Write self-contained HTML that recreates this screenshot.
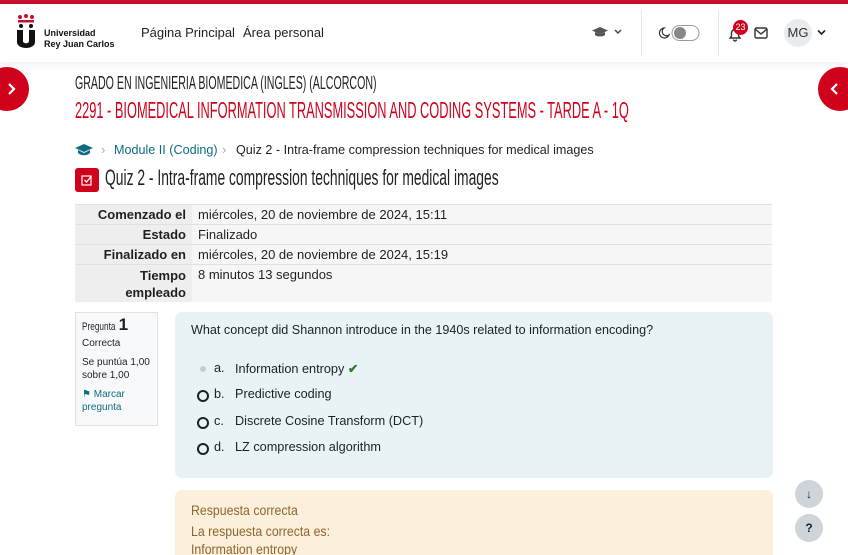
<!DOCTYPE html>
<html><head><meta charset="utf-8"><style>
*{box-sizing:border-box;margin:0;padding:0}
html,body{width:848px;height:555px;overflow:hidden}
body{background:#fff;font-family:"Liberation Sans",sans-serif;color:#1d2125;position:relative}
.topbar{position:absolute;top:0;left:0;width:848px;height:4px;background:#c8102e}
.nav{position:absolute;top:4px;left:0;width:848px;height:58px;background:#fff;box-shadow:0 2px 8px rgba(0,0,0,.07)}
.abs{position:absolute}
.cond{display:inline-block;transform-origin:left center;white-space:nowrap}
.navlink{font-size:13px;color:#1d2125;top:21px}
.sep{position:absolute;top:6px;width:1px;height:46px;background:#e5e5e5}
.fab{position:absolute;width:44px;height:44px;border-radius:22px;background:#d0021b;top:67px}
table{border-collapse:collapse;font-size:13px}
.tbl{position:absolute;left:75px;top:204px;width:697px}
.tbl td{border-top:1px solid #dee2e6;padding:2px 6px 1px;vertical-align:top;line-height:16px}
.tbl td.l{background:#eeeeee;text-align:right;font-weight:bold;width:117px}
.tbl td.v{background:#f6f6f6}
.radio{position:absolute;width:12px;height:12px;border:2px solid #1d2125;border-radius:50%;left:197px}
.opt{position:absolute;font-size:12.7px;left:214px}
.opt span{position:absolute;left:21px;white-space:nowrap}
.side{position:absolute;left:795px;width:28px;height:28px;border-radius:14px;background:#ced4da;font-size:12px;font-weight:bold;text-align:center;line-height:28px;color:#1d2125}
</style></head><body>
<div class="topbar"></div>
<div class="nav">
  <svg class="abs" style="left:16px;top:10px" width="20" height="36" viewBox="0 0 20 36">
    <circle cx="4" cy="3" r="2" fill="#c8102e"/><circle cx="10" cy="2" r="2" fill="#c8102e"/><circle cx="16" cy="3" r="2" fill="#c8102e"/>
    <rect x="2" y="6" width="16" height="2.5" fill="#c8102e"/>
    <circle cx="5" cy="12" r="2" fill="#111"/><circle cx="15" cy="12" r="2" fill="#111"/>
    <path d="M1 16h6v11c0 3 6 3 6 0V16h6v12c0 8-18 8-18 0z" fill="#111"/>
  </svg>
  <div class="abs" style="left:44px;top:24px;font-size:9px;line-height:11px;font-weight:bold;color:#111">Universidad<br>Rey Juan Carlos</div>
  <div class="abs navlink" style="left:141px">Página Principal</div>
  <div class="abs navlink" style="left:243px">Área personal</div>
  <svg class="abs" style="left:592px;top:22px" width="30" height="12" viewBox="0 0 30 12"><path d="M8 1L0 4.5 8 8 16 4.5z M3 6v3c2 2 8 2 10 0V6l-5 2z" fill="#555"/><path d="M23 4l3 3 3-3" stroke="#444" stroke-width="1.5" fill="none"/></svg>
  <div class="sep" style="left:641px"></div>
  <svg class="abs" style="left:655px;top:20px" width="48" height="18" viewBox="0 0 48 18"><path d="M9 4a5 5 0 1 0 5 7a4 4 0 0 1-5-7z" stroke="#333" stroke-width="1.2" fill="none"/><rect x="17" y="1.5" width="27" height="15" rx="7.5" fill="#fff" stroke="#999"/><circle cx="25" cy="9" r="6" fill="#888"/></svg>
  <div class="sep" style="left:718px"></div>
  <svg class="abs" style="left:727px;top:22px" width="16" height="16" viewBox="0 0 16 16"><path d="M3 12h10l-1.5-2V7a3.5 3.5 0 0 0-7 0v3z M6.5 13.5a1.5 1.5 0 0 0 3 0" stroke="#333" stroke-width="1.4" fill="none"/></svg>
  <div class="abs" style="left:733px;top:16px;width:15px;height:15px;border-radius:8px;background:#d0021b;color:#fff;font-size:9px;text-align:center;line-height:15px">23</div>
  <svg class="abs" style="left:754px;top:23px" width="14" height="12" viewBox="0 0 14 12"><rect x="1" y="1" width="12" height="10" rx="1.5" stroke="#333" stroke-width="1.4" fill="none"/><path d="M1 2l6 5 6-5" stroke="#333" stroke-width="1.4" fill="none"/></svg>
  <div class="abs" style="left:784px;top:15px;width:28px;height:28px;border-radius:14px;background:#e9ecef;font-size:13px;text-align:center;line-height:28px;color:#333">MG</div>
  <svg class="abs" style="left:817px;top:25px" width="9" height="7" viewBox="0 0 9 7"><path d="M1 1.5l3.5 3.5 3.5-3.5" stroke="#222" stroke-width="1.6" fill="none"/></svg>
</div>
<div class="fab" style="left:-15px"><svg class="abs" style="left:22px;top:16px" width="10" height="12" viewBox="0 0 10 12"><path d="M2 1l5 5-5 5" stroke="#fff" stroke-width="2.2" fill="none"/></svg></div>
<div class="fab" style="left:818px"><svg class="abs" style="left:11px;top:16px" width="10" height="12" viewBox="0 0 10 12"><path d="M8 1L3 6l5 5" stroke="#fff" stroke-width="2.2" fill="none"/></svg></div>

<div class="abs" style="left:75px;top:73px;font-size:18px;color:#222"><span class="cond" style="transform:scaleX(.59)">GRADO EN INGENIERIA BIOMEDICA (INGLES) (ALCORCON)</span></div>
<div class="abs" style="left:75px;top:97px;font-size:23px;color:#d0021b"><span class="cond" style="transform:scaleX(.557)">2291 - BIOMEDICAL INFORMATION TRANSMISSION AND CODING SYSTEMS - TARDE A - 1Q</span></div>

<svg class="abs" style="left:75px;top:144px" width="18" height="12" viewBox="0 0 18 12"><path d="M9 0L0 4 9 8 18 4z M3 6v3c3 3 9 3 12 0V6L9 9z" fill="#0f6c80"/></svg>
<div class="abs" style="left:101px;top:142px;font-size:13px;color:#aaa">&#8250;</div>
<div class="abs" style="left:114px;top:143px;font-size:12.6px;color:#0f6c80">Module II (Coding)</div>
<div class="abs" style="left:222px;top:142px;font-size:13px;color:#aaa">&#8250;</div>
<div class="abs" style="left:236px;top:143px;font-size:12.6px;color:#1d2125">Quiz 2 - Intra-frame compression techniques for medical images</div>

<div class="abs" style="left:75px;top:168px;width:24px;height:24px;border-radius:3px;background:#d0021b"><svg class="abs" style="left:6px;top:6px" width="12" height="12" viewBox="0 0 12 12"><rect x="1" y="2" width="9" height="9" stroke="#fff" stroke-width="1.2" fill="none"/><path d="M3.5 6l2 2 5-6" stroke="#fff" stroke-width="1.3" fill="none"/></svg></div>
<div class="abs" style="left:105px;top:165px;font-size:22px;color:#1d2125"><span class="cond" style="transform:scaleX(.63)">Quiz 2 - Intra-frame compression techniques for medical images</span></div>

<table class="tbl">
<tr><td class="l">Comenzado el</td><td class="v">miércoles, 20 de noviembre de 2024, 15:11</td></tr>
<tr><td class="l">Estado</td><td class="v">Finalizado</td></tr>
<tr><td class="l">Finalizado en</td><td class="v">miércoles, 20 de noviembre de 2024, 15:19</td></tr>
<tr><td class="l" style="line-height:17px">Tiempo<br>empleado</td><td class="v">8 minutos 13 segundos</td></tr>
</table>

<div class="abs" style="left:75px;top:312px;width:83px;height:114px;border:1px solid #dee2e6;background:#f8f9fa;padding:5px 6px;font-size:10px;line-height:13px;color:#1d2125">
  <div><span class="cond" style="transform:scaleX(.75);font-size:11px">Pregunta</span><b style="font-size:17px;margin-left:-8px">1</b></div>
  <div style="margin-top:3px">Correcta</div>
  <div style="margin-top:6px">Se puntúa 1,00 sobre 1,00</div>
  <div style="margin-top:6px;color:#0f6c80">&#9873; Marcar pregunta</div>
</div>

<div class="abs" style="left:175px;top:312px;width:598px;height:166px;background:#e7f3f5;border-radius:7px"></div>
<div class="abs" style="left:191px;top:323px;font-size:12.6px">What concept did Shannon introduce in the 1940s related to information encoding?</div>
<div class="abs" style="left:200px;top:366px;width:6px;height:6px;border-radius:3px;background:#ccc"></div>
<div class="opt" style="top:361px">a.<span>Information entropy <b style="color:#357a32">✔</b></span></div>
<div class="radio" style="top:390px"></div><div class="opt" style="top:387px">b.<span>Predictive coding</span></div>
<div class="radio" style="top:417px"></div><div class="opt" style="top:414px">c.<span>Discrete Cosine Transform (DCT)</span></div>
<div class="radio" style="top:443px"></div><div class="opt" style="top:440px">d.<span>LZ compression algorithm</span></div>

<div class="abs" style="left:175px;top:490px;width:598px;height:80px;background:#fcefdc;border-radius:7px"></div>
<div class="abs" style="left:191px;top:500px;font-size:14px;color:#8e662e;line-height:20px"><span class="cond" style="transform:scaleX(.88)">Respuesta correcta</span></div>
<div class="abs" style="left:191px;top:522px;font-size:14px;color:#8e662e;line-height:18px"><span class="cond" style="transform:scaleX(.88)">La respuesta correcta es:<br>Information entropy</span></div>

<div class="side" style="top:480px">&#8595;</div>
<div class="side" style="top:514px">?</div>
</body></html>
